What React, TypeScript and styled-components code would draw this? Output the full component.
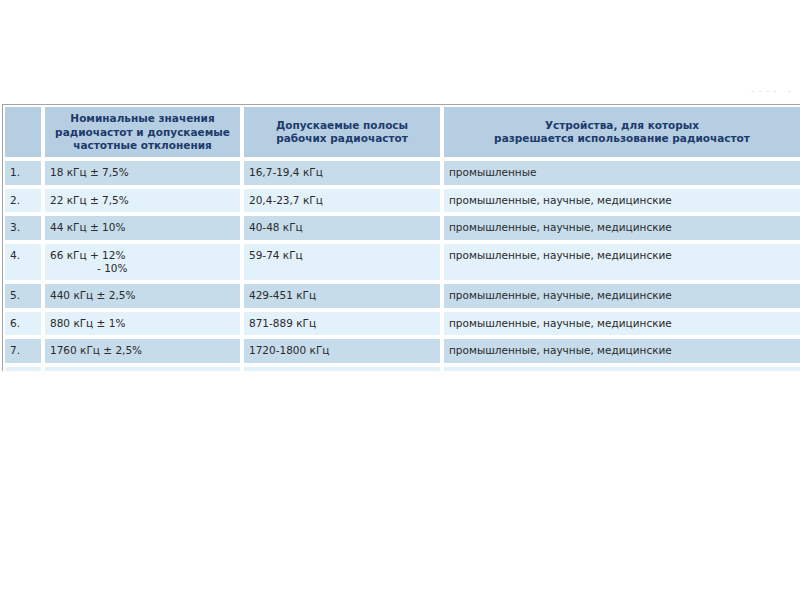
import styled, { createGlobalStyle } from 'styled-components';

const GlobalStyle = createGlobalStyle`
    html, body {
        margin: 0;
        padding: 0;
        background: #ffffff;
    }
    body {
        font-family: 'DejaVu Sans', Verdana, sans-serif;
    }
`;

type Row = {
    num: string;
    nominal: string[];
    band: string;
    usage: string;
};

const rows: Row[] = [
    { num: '1.', nominal: ['18 кГц ± 7,5%'], band: '16,7-19,4 кГц', usage: 'промышленные' },
    { num: '2.', nominal: ['22 кГц ± 7,5%'], band: '20,4-23,7 кГц', usage: 'промышленные, научные, медицинские' },
    { num: '3.', nominal: ['44 кГц ± 10%'], band: '40-48 кГц', usage: 'промышленные, научные, медицинские' },
    { num: '4.', nominal: ['66 кГц + 12%', '- 10%'], band: '59-74 кГц', usage: 'промышленные, научные, медицинские' },
    { num: '5.', nominal: ['440 кГц ± 2,5%'], band: '429-451 кГц', usage: 'промышленные, научные, медицинские' },
    { num: '6.', nominal: ['880 кГц ± 1%'], band: '871-889 кГц', usage: 'промышленные, научные, медицинские' },
    { num: '7.', nominal: ['1760 кГц ± 2,5%'], band: '1720-1800 кГц', usage: 'промышленные, научные, медицинские' },
    { num: '', nominal: [''], band: '', usage: '' },
];

export default function App(){
    return (
        <Page>
            <GlobalStyle />
            <TopBar>
                <FaintNote>- - - -&nbsp;&nbsp;&nbsp;-</FaintNote>
            </TopBar>
            <Clip>
                <Table>
                    <thead>
                        <tr>
                            <HeadCell $w={40}></HeadCell>
                            <HeadCell $w={199}>
                                Номинальные значения<br />
                                радиочастот и допускаемые<br />
                                частотные отклонения
                            </HeadCell>
                            <HeadCell $w={200}>
                                Допускаемые полосы<br />
                                рабочих радиочастот
                            </HeadCell>
                            <HeadCell $w={360}>
                                Устройства, для которых<br />
                                разрешается использование радиочастот
                            </HeadCell>
                        </tr>
                    </thead>
                    <tbody>
                        {rows.map((r, i) => (
                            <tr key={i}>
                                <Cell $odd={i % 2 === 0}>{r.num}</Cell>
                                <Cell $odd={i % 2 === 0}>
                                    {r.nominal[0] || '\u00a0'}
                                    {r.nominal[1] && <Indent>{r.nominal[1]}</Indent>}
                                </Cell>
                                <Cell $odd={i % 2 === 0}>{r.band}</Cell>
                                <Cell $odd={i % 2 === 0}>{r.usage}</Cell>
                            </tr>
                        ))}
                    </tbody>
                </Table>
            </Clip>
        </Page>
    );
}

const Page = styled.div`
    width: 800px;
    height: 600px;
    overflow: hidden;
    background: #ffffff;
`;

const TopBar = styled.div`
    height: 104px;
    display: flex;
    justify-content: flex-end;
    align-items: flex-end;
    padding-right: 8px;
    box-sizing: border-box;
`;

const FaintNote = styled.span`
    font-size: 8px;
    line-height: 8px;
    color: #d4d4d4;
    margin-bottom: 8px;
    letter-spacing: 1px;
`;

const Clip = styled.div`
    height: 267px;
    overflow: hidden;
    padding-left: 2px;
`;

const Table = styled.table`
    table-layout: fixed;
    width: 800px;
    border-collapse: separate;
    border-spacing: 0;
    border-top: 1px solid #a3a3a3;
    border-left: 1px solid #a3a3a3;
    font-size: 10.5px;
`;

const HeadCell = styled.th<{ $w: number }>`
    width: ${p => p.$w}px;
    box-sizing: border-box;
    border: 2px solid #ffffff;
    background: #b6cee1;
    color: #1c3b6c;
    font-weight: bold;
    text-align: center;
    vertical-align: middle;
    line-height: 13.5px;
    padding: 5px 2px 4.5px;
    white-space: nowrap;
`;

const Cell = styled.td<{ $odd: boolean }>`
    box-sizing: border-box;
    border: 2px solid #ffffff;
    background: ${p => (p.$odd ? '#c6dcea' : '#e2f1fa')};
    color: #2a2a2a;
    text-align: left;
    vertical-align: top;
    line-height: 13px;
    padding: 5px 5px 5.5px;
    white-space: nowrap;
`;

const Indent = styled.span`
    display: block;
    padding-left: 47px;
`;
